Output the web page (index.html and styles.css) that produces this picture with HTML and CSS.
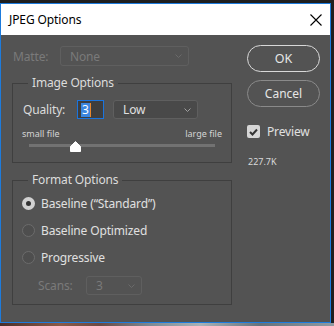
FILE: index.html
```html
<!DOCTYPE html>
<html lang="en">
    <head>
        <meta charset="UTF-8">
        <title>JPEG Options</title>
        <link rel="stylesheet" href="styles.css">
    </head>
    <body>
        <div class="dialog">
            <div class="titlebar">
                <span class="title">JPEG Options</span>
                <svg class="close" width="12" height="12" viewBox="0 0 12 12">
                    <path d="M0.5 0.5 L11.5 11.5 M11.5 0.5 L0.5 11.5" stroke="#000" stroke-width="1.1" fill="none"/>
                </svg>
            </div>

            <div class="content">
                <div class="main">
                    <div class="row matte">
                        <span class="label disabled">Matte:</span>
                        <div class="select disabled matte-select">
                            <span>None</span>
                            <svg class="chevron" width="7" height="4" viewBox="0 0 7 4"><path d="M0.5 0.5 L3.5 3.5 L6.5 0.5" stroke="#6a6a6a" fill="none"/></svg>
                        </div>
                    </div>

                    <fieldset class="group image-group">
                        <legend>Image Options</legend>
                        <div class="row quality">
                            <span class="label">Quality:</span>
                            <div class="field"><span class="selected">3</span><span class="caret"></span></div>
                            <div class="select low-select">
                                <span>Low</span>
                                <svg class="chevron" width="7" height="4" viewBox="0 0 7 4"><path d="M0.5 0.5 L3.5 3.5 L6.5 0.5" stroke="#a0a0a0" fill="none"/></svg>
                            </div>
                        </div>
                        <div class="scale">
                            <span>small file</span>
                            <span>large file</span>
                        </div>
                        <div class="slider">
                            <div class="track"></div>
                            <svg class="thumb" width="11" height="11" viewBox="0 0 11 11">
                                <path d="M5.5 0.5 L10.5 5.5 L10.5 10.5 L0.5 10.5 L0.5 5.5 Z" fill="#fff" stroke="#fff" stroke-linejoin="round"/>
                            </svg>
                        </div>
                    </fieldset>

                    <fieldset class="group format-group">
                        <legend>Format Options</legend>
                        <div class="radio checked"><span class="dot"></span>Baseline (“Standard”)</div>
                        <div class="radio"><span class="dot"></span>Baseline Optimized</div>
                        <div class="radio"><span class="dot"></span>Progressive</div>
                        <div class="row scans">
                            <span class="label disabled">Scans:</span>
                            <div class="select disabled scans-select">
                                <span>3</span>
                                <svg class="chevron" width="7" height="4" viewBox="0 0 7 4"><path d="M0.5 0.5 L3.5 3.5 L6.5 0.5" stroke="#6a6a6a" fill="none"/></svg>
                            </div>
                        </div>
                    </fieldset>
                </div>

                <div class="side">
                    <button class="btn primary">OK</button>
                    <button class="btn">Cancel</button>
                    <div class="check">
                        <span class="box">
                            <svg width="9" height="8" viewBox="0 0 9 8"><path d="M1 4 L3.5 6.5 L8 1.5" stroke="#333" stroke-width="2" fill="none"/></svg>
                        </span>
                        Preview
                    </div>
                    <div class="size">227.7K</div>
                </div>
            </div>
        </div>
        <div class="photo"></div>
    </body>
</html>
```

FILE: styles.css
```css
* {
    box-sizing: border-box;
}
html, body {
    margin: 0;
    padding: 0;
}
body {
    width: 334px;
    height: 326px;
    overflow: hidden;
    background-color: #1f1f1f;
    font-family: "Noto Sans", sans-serif;
    font-size: 12px;
    letter-spacing: -0.15px;
    color: #dcdcdc;
}
.dialog {
    width: 331px;
    height: 320px;
    margin-top: 3px;
    border: 1px solid #1d7bdc;
    background-color: #535353;
}
.photo {
    height: 3px;
    background: linear-gradient(90deg, #4a2f2a 0, #8b5a48 18%, #6b4a44 30%, #7d8a94 45%, #a8b2b8 60%, #65727c 78%, #8f9aa2 100%);
}
.titlebar {
    height: 31px;
    background-color: #fff;
    display: flex;
    align-items: center;
    justify-content: space-between;
    padding: 0 8px 0 8px;
}
.title {
    color: #000;
    font-size: 12px;
    letter-spacing: -0.1px;
}
.close {
    display: block;
}
.content {
    display: flex;
    gap: 15px;
    padding: 10px 0 0 11px;
}
.main {
    width: 220px;
}
.row {
    display: flex;
    align-items: center;
}
.label.disabled,
.select.disabled {
    color: #7a7a7a;
}
.select {
    display: flex;
    align-items: center;
    justify-content: space-between;
    border: 1px solid #5f5f5f;
    border-radius: 3px;
    padding: 0 6px 0 9px;
}
.chevron {
    display: block;
}
.matte {
    margin-top: 1px;
    height: 20px;
}
.matte .label {
    width: 48px;
    padding-left: 1px;
}
.matte-select {
    width: 129px;
    height: 20px;
}

/* group boxes */
.group {
    margin: 9px 0 0 0;
    padding: 0;
    border: 1px solid #3f3f3f;
    min-width: 0;
}
.group legend {
    margin-left: 15px;
    padding: 0 4px;
    line-height: 16px;
    color: #dcdcdc;
}
.quality {
    margin-top: 9px;
    padding-left: 10px;
    height: 19px;
}
.quality .label {
    width: 54px;
}
.field {
    width: 27px;
    height: 19px;
    border: 1px solid #1a74de;
    background-color: #3e3e3e;
    display: flex;
    align-items: center;
    padding-left: 3px;
}
.field .selected {
    background-color: #3b86e0;
    color: #fff;
    line-height: 14px;
    padding: 0 1px;
}
.field .caret {
    width: 1px;
    height: 14px;
    background-color: #e8862c;
}
.low-select {
    width: 85px;
    height: 19px;
    margin-left: 9px;
    background-color: #494949;
    color: #e0e0e0;
}
.scale {
    display: flex;
    justify-content: space-between;
    margin-top: 9px;
    padding: 0 9px;
    font-size: 9px;
    letter-spacing: 0;
    line-height: 12px;
    color: #d4d4d4;
}
.slider {
    position: relative;
    height: 12px;
    padding-top: 4px;
    margin: 0 16px 10px 16px;
}
.track {
    height: 3px;
    background-color: #727272;
}
.thumb {
    position: absolute;
    left: 41px;
    top: 1px;
}

/* format options */
.radio {
    display: flex;
    align-items: center;
    height: 20px;
    margin-top: 7px;
    padding-left: 9px;
    gap: 6px;
    color: #e0e0e0;
}
.format-group legend + .radio {
    margin-top: 5px;
}
.radio .dot {
    width: 13px;
    height: 13px;
    border-radius: 50%;
    border: 1.5px solid #6c6c6c;
    background-color: #4e4e4e;
}
.radio.checked .dot {
    border: 4px solid #d2d2d2;
    background-color: #333;
}
.scans {
    margin-top: 9px;
    margin-bottom: 9px;
    padding-left: 25px;
    height: 19px;
}
.scans .label {
    width: 48px;
}
.scans-select {
    width: 56px;
    height: 19px;
}

/* right column */
.side {
    display: flex;
    flex-direction: column;
    width: 73px;
}
.btn {
    width: 73px;
    height: 27px;
    border-radius: 14px;
    background: transparent;
    border: 1px solid #8a8a8a;
    color: #e6e6e6;
    font-family: "Noto Sans", sans-serif;
    font-size: 12px;
    padding: 0;
}
.btn.primary {
    border: 1.5px solid #d8d8d8;
    font-size: 12.5px;
}
.btn + .btn {
    margin-top: 8px;
}
.check {
    display: flex;
    align-items: center;
    gap: 7px;
    margin-top: 18px;
    height: 13px;
    color: #e0e0e0;
}
.box {
    width: 13px;
    height: 13px;
    border-radius: 2px;
    background-color: #d6d6d6;
    display: flex;
    align-items: center;
    justify-content: center;
}
.box svg {
    display: block;
}
.size {
    margin-top: 17px;
    padding-left: 1px;
    font-size: 9px;
    letter-spacing: 0;
    line-height: 14px;
    color: #d8d8d8;
}
```
